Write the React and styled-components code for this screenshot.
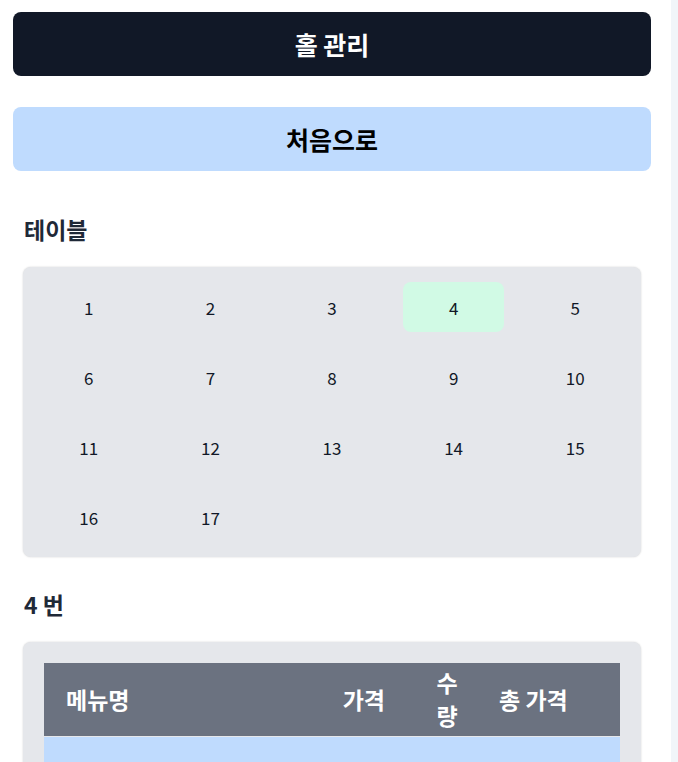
import React, { useState } from "react";
import styled, { createGlobalStyle } from "styled-components";

const tables = Array.from({ length: 17 }, (_, i) => i + 1);

const columns = [
  { key: "name", label: "메뉴명", width: 277, align: "left", pad: "0 0 0 22px" },
  { key: "price", label: "가격", width: 84, align: "right", pad: "0 20px 0 0" },
  { key: "qty", label: "수량", width: 84, align: "center", pad: "0 26px" },
  { key: "total", label: "총 가격", width: 131, align: "left", pad: "0 0 0 10px" },
];

const App = () => {
  const [selected, setSelected] = useState(4);

  return (
    <>
      <GlobalStyle />
      <Layout>
        <Main>
          <TopButton $dark>홀 관리</TopButton>
          <TopButton>처음으로</TopButton>

          <Section>
            <Heading>테이블</Heading>
            <TableGrid>
              {tables.map((n) => (
                <TableCell
                  key={n}
                  $active={n === selected}
                  onClick={() => setSelected(n)}
                >
                  {n}
                </TableCell>
              ))}
            </TableGrid>
          </Section>

          <Section $next>
            <Heading>{selected} 번</Heading>
            <OrderPanel>
              <OrderTable>
                <colgroup>
                  {columns.map((c) => (
                    <col key={c.key} style={{ width: c.width }} />
                  ))}
                </colgroup>
                <thead>
                  <tr>
                    {columns.map((c) => (
                      <HeadCell key={c.key} $align={c.align} $pad={c.pad}>
                        {c.label}
                      </HeadCell>
                    ))}
                  </tr>
                </thead>
                <tbody>
                  <BodyRow>
                    <BodyCell $align="left" $pad="0 0 0 22px">김치찌개</BodyCell>
                    <BodyCell $align="right" $pad="0 20px 0 0">8000</BodyCell>
                    <BodyCell $align="center" $pad="0">1</BodyCell>
                    <BodyCell $align="left" $pad="0 0 0 10px">8000</BodyCell>
                  </BodyRow>
                </tbody>
              </OrderTable>
            </OrderPanel>
          </Section>
        </Main>
        <Aside />
      </Layout>
    </>
  );
};

const GlobalStyle = createGlobalStyle`
  html, body {
    margin: 0;
    padding: 0;
    background: #ffffff;
    font-family: "Noto Sans CJK KR", "Noto Sans", sans-serif;
    color: #111827;
  }
  * {
    box-sizing: border-box;
  }
`;

const Layout = styled.div`
  display: flex;
  align-items: flex-start;
  height: 762px;
  overflow: hidden;
`;

const Main = styled.main`
  width: 671px;
  flex-shrink: 0;
  padding: 12px 20px 0 13px;
  display: flex;
  flex-direction: column;

  & > * {
    flex-shrink: 0;
  }
`;

const Aside = styled.aside`
  flex: 1;
  align-self: stretch;
  background: #f1f5f9;
`;

const TopButton = styled.button`
  height: 64px;
  width: 100%;
  border: none;
  border-radius: 8px;
  background: ${(p) => (p.$dark ? "#111827" : "#bfdbfe")};
  color: ${(p) => (p.$dark ? "#ffffff" : "#000000")};
  font-family: inherit;
  font-size: 25px;
  font-weight: 700;
  cursor: pointer;

  & + & {
    margin-top: 31px;
  }
`;

const Section = styled.section`
  display: flex;
  flex-direction: column;
  padding: 0 10px;
  margin-top: ${(p) => (p.$next ? "31px" : "42px")};
`;

const Heading = styled.h2`
  margin: 0 0 21px;
  padding-left: 1px;
  font-size: 23px;
  line-height: 33px;
  font-weight: 700;
  color: #1f2937;
`;

const Panel = styled.div`
  background: #e5e7eb;
  border-radius: 8px;
  box-shadow: 0 0 2px rgba(0, 0, 0, 0.18);
`;

const TableGrid = styled(Panel)`
  display: grid;
  grid-template-columns: repeat(5, 1fr);
  grid-auto-rows: 50px;
  gap: 20px;
  padding: 15px;
`;

const TableCell = styled.div`
  display: flex;
  align-items: center;
  justify-content: center;
  border-radius: 8px;
  font-size: 17px;
  color: #111827;
  background: ${(p) => (p.$active ? "#d1fae5" : "transparent")};
  cursor: pointer;
`;

const OrderPanel = styled(Panel)`
  padding: 21px;
`;

const OrderTable = styled.table`
  width: 100%;
  border-collapse: collapse;
  table-layout: fixed;
`;

const HeadCell = styled.th`
  background: #6b7280;
  color: #ffffff;
  font-size: 23px;
  font-weight: 700;
  line-height: 33px;
  padding: ${(p) => p.$pad};
  height: 73px;
  text-align: ${(p) => p.$align};
  border-bottom: 1px solid #e5e7eb;
`;

const BodyRow = styled.tr`
  background: #bfdbfe;
`;

const BodyCell = styled.td`
  font-size: 20px;
  line-height: 30px;
  padding: ${(p) => p.$pad};
  padding-top: 44px;
  padding-bottom: 28px;
  text-align: ${(p) => p.$align};
  color: #111827;
`;

export default App;
